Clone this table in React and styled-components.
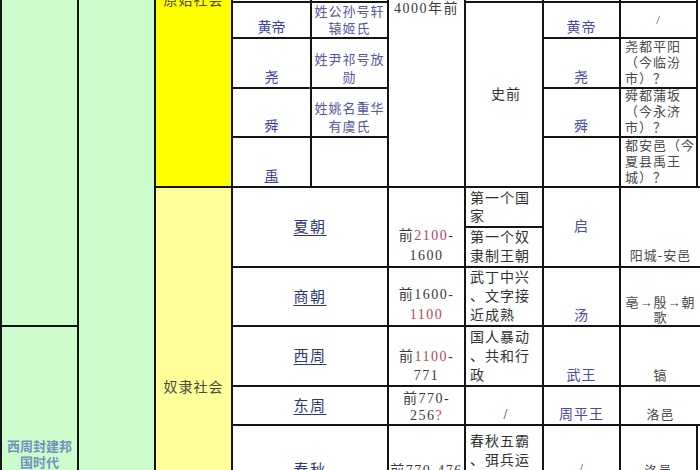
import React from "react";
import styled, { createGlobalStyle, css } from "styled-components";

const Global = createGlobalStyle`
  html, body { margin: 0; padding: 0; background: #fff; }
  body { font-family: "Liberation Serif", "Noto Sans CJK SC", serif; }
`;

const Viewport = styled.div`
  width: 700px;
  height: 470px;
  overflow: hidden;
  background: #fff;
`;

const Sheet = styled.div`
  box-sizing: border-box;
  width: 700px;
  margin-top: -30px;
  padding-left: 2px;
  display: grid;
  grid-template-columns: 75px 75px 75px 77px 75px 75px 76px 75px 75px 1fr;
  grid-template-rows: 31px 34px 48px 47px 48px 38px 38px 57px 58px 37px 88px;
  gap: 2px;
  background: #141414;
`;

const vMap = { top: "flex-start", center: "center", bottom: "flex-end" };

const Cell = styled.div`
  grid-area: ${(p) => p.$area};
  background: #fff;
  min-width: 0;
  overflow: hidden;
  display: flex;
  flex-direction: column;
  justify-content: ${(p) => vMap[p.$v || "bottom"]};
  align-items: ${(p) => (p.$h === "left" ? "flex-start" : "center")};
  text-align: ${(p) => (p.$h === "left" ? "left" : "center")};
  font-family: "Liberation Serif", "Noto Sans CJK SC", serif;
  font-size: 14px;
  line-height: 18px;
  color: #3a3a3a;
`;

const Line = styled.span`
  display: block;
  white-space: nowrap;
`;

const Red = styled.span`
  color: #b2475a;
`;

const GreenCell = styled(Cell)`
  background: #ccfccc;
  justify-content: flex-start;
  padding-top: ${(p) => p.$pt || 0}px;
  font-size: 13px;
  line-height: 16px;
  font-weight: 700;
  color: #7393bd;
`;

const EraCell = styled(Cell)`
  background: ${(p) => (p.$bright ? "#ffff00" : "#ffff99")};
  justify-content: flex-start;
  padding-top: ${(p) => p.$pt}px;
  line-height: 20px;
  letter-spacing: 1px;
  color: #4a4a3a;
`;

const BlankCell = styled(Cell)``;

const NameCell = styled(Cell)`
  color: #3d3d9c;
  ${(p) =>
    p.$underline &&
    css`
      text-decoration: underline;
    `}
`;

const DescCell = styled(Cell)`
  font-size: 13px;
  letter-spacing: 1px;
  line-height: ${(p) => p.$lh || 18}px;
  color: #55559c;
`;

const DateCell = styled(Cell)`
  letter-spacing: 1.5px;
  line-height: ${(p) => p.$lh || 19}px;
  padding-top: ${(p) => p.$pt || 0}px;
  color: #3a3a3a;
`;

const EventCell = styled(Cell)`
  padding-left: 4px;
  padding-top: ${(p) => p.$pt || 0}px;
  letter-spacing: 1px;
  line-height: ${(p) => p.$lh || 19}px;
  color: #333;
`;

const RulerCell = styled(Cell)`
  color: #4a4aa0;
  letter-spacing: 1px;
`;

const CapitalCell = styled(Cell)`
  font-size: 13px;
  letter-spacing: 1px;
  line-height: ${(p) => p.$lh || 16}px;
  padding-left: ${(p) => (p.$h === "left" ? 4 : 0)}px;
  color: #4a4a4a;
`;

const DynastyCell = styled(Cell)`
  font-size: 15px;
  letter-spacing: 1.5px;
  color: #2d3872;
  text-decoration: underline;
  text-underline-offset: 3px;
`;

const Lines = ({ items }) =>
  items.map((t, i) => <Line key={i}>{t}</Line>);

export default function App() {
  return (
    <>
      <Global />
      <Viewport>
        <Sheet>
          {/* left green columns */}
          <GreenCell $area="1 / 1 / 9 / 2" />
          <GreenCell $area="9 / 1 / 12 / 2" $pt={112}>
            <Lines items={["西周封建邦", "国时代"]} />
          </GreenCell>
          <GreenCell $area="1 / 2 / 12 / 3" />

          {/* era column */}
          <EraCell $area="1 / 3 / 6 / 4" $bright $pt={21}>
            原始社会
          </EraCell>
          <EraCell $area="6 / 3 / 12 / 4" $pt={190}>
            奴隶社会
          </EraCell>

          {/* hidden top row */}
          <BlankCell $area="1 / 4 / 2 / 5" />
          <BlankCell $area="1 / 5 / 2 / 6" />
          <DateCell $area="1 / 6 / 6 / 7" $v="top" $pt={29} $lh={20}>
            4000年前
          </DateCell>
          <BlankCell $area="1 / 7 / 2 / 8" />
          <BlankCell $area="1 / 8 / 2 / 9" />
          <BlankCell $area="1 / 9 / 2 / 10" />
          <BlankCell $area="1 / 10 / 6 / 11" />

          {/* 黄帝 */}
          <NameCell $area="2 / 4 / 3 / 5">黄帝</NameCell>
          <DescCell $area="2 / 5 / 3 / 6" $lh={17}>
            <Lines items={["姓公孙号轩", "辕姬氏"]} />
          </DescCell>
          <EventCell $area="2 / 7 / 6 / 8" $v="center" $h="center">
            史前
          </EventCell>
          <RulerCell $area="2 / 8 / 3 / 9">黄帝</RulerCell>
          <CapitalCell $area="2 / 9 / 3 / 10" $v="center">
            /
          </CapitalCell>

          {/* 尧 */}
          <NameCell $area="3 / 4 / 4 / 5">尧</NameCell>
          <DescCell $area="3 / 5 / 4 / 6">
            <Lines items={["姓尹祁号放", "勋"]} />
          </DescCell>
          <RulerCell $area="3 / 8 / 4 / 9">尧</RulerCell>
          <CapitalCell $area="3 / 9 / 4 / 10" $h="left">
            <Lines items={["尧都平阳", "（今临汾", "市）？"]} />
          </CapitalCell>

          {/* 舜 */}
          <NameCell $area="4 / 4 / 5 / 5">舜</NameCell>
          <DescCell $area="4 / 5 / 5 / 6">
            <Lines items={["姓姚名重华", "有虞氏"]} />
          </DescCell>
          <RulerCell $area="4 / 8 / 5 / 9">舜</RulerCell>
          <CapitalCell $area="4 / 9 / 5 / 10" $h="left">
            <Lines items={["舜都蒲坂", "（今永济", "市）？"]} />
          </CapitalCell>

          {/* 禹 */}
          <NameCell $area="5 / 4 / 6 / 5" $underline>
            禹
          </NameCell>
          <BlankCell $area="5 / 5 / 6 / 6" />
          <BlankCell $area="5 / 8 / 6 / 9" />
          <CapitalCell $area="5 / 9 / 6 / 10" $h="left">
            <Lines items={["都安邑（今", "夏县禹王", "城）？"]} />
          </CapitalCell>

          {/* 夏朝 */}
          <DynastyCell $area="6 / 4 / 8 / 6" $v="center">
            夏朝
          </DynastyCell>
          <DateCell $area="6 / 6 / 8 / 7" $lh={20}>
            <Line>
              前<Red>2100</Red>-
            </Line>
            <Line>1600</Line>
          </DateCell>
          <EventCell $area="6 / 7 / 7 / 8" $h="left" $lh={18}>
            <Lines items={["第一个国", "家"]} />
          </EventCell>
          <EventCell $area="7 / 7 / 8 / 8" $h="left">
            <Lines items={["第一个奴", "隶制王朝"]} />
          </EventCell>
          <RulerCell $area="6 / 8 / 8 / 9" $v="center">
            启
          </RulerCell>
          <CapitalCell $area="6 / 9 / 8 / 11" $lh={20}>
            阳城-安邑
          </CapitalCell>

          {/* 商朝 */}
          <DynastyCell $area="8 / 4 / 9 / 6" $v="center">
            商朝
          </DynastyCell>
          <DateCell $area="8 / 6 / 9 / 7" $lh={20}>
            <Line>前1600-</Line>
            <Line>
              <Red>1100</Red>
            </Line>
          </DateCell>
          <EventCell $area="8 / 7 / 9 / 8" $h="left">
            <Lines items={["武丁中兴", "、文字接", "近成熟"]} />
          </EventCell>
          <RulerCell $area="8 / 8 / 9 / 9">汤</RulerCell>
          <CapitalCell $area="8 / 9 / 9 / 11" $lh={15}>
            <Lines items={["亳→殷→朝", "歌"]} />
          </CapitalCell>

          {/* 西周 */}
          <DynastyCell $area="9 / 4 / 10 / 6" $v="center">
            西周
          </DynastyCell>
          <DateCell $area="9 / 6 / 10 / 7">
            <Line>
              前<Red>1100</Red>-
            </Line>
            <Line>771</Line>
          </DateCell>
          <EventCell $area="9 / 7 / 10 / 8" $h="left">
            <Lines items={["国人暴动", "、共和行", "政"]} />
          </EventCell>
          <RulerCell $area="9 / 8 / 10 / 9">武王</RulerCell>
          <CapitalCell $area="9 / 9 / 10 / 11" $lh={19}>
            镐
          </CapitalCell>

          {/* 东周 */}
          <DynastyCell $area="10 / 4 / 11 / 6" $v="center">
            东周
          </DynastyCell>
          <DateCell $area="10 / 6 / 11 / 7" $lh={17}>
            <Line>前770-</Line>
            <Line>
              256<Red>?</Red>
            </Line>
          </DateCell>
          <EventCell $area="10 / 7 / 11 / 8" $h="center">
            /
          </EventCell>
          <RulerCell $area="10 / 8 / 11 / 9">周平王</RulerCell>
          <CapitalCell $area="10 / 9 / 11 / 11" $lh={19}>
            洛邑
          </CapitalCell>

          {/* 春秋 */}
          <DynastyCell $area="11 / 4 / 12 / 6" $v="center">
            春秋
          </DynastyCell>
          <DateCell $area="11 / 6 / 12 / 7" $v="center">
            前770-476
          </DateCell>
          <EventCell $area="11 / 7 / 12 / 8" $h="left" $v="top" $pt={6}>
            <Lines items={["春秋五霸", "、弭兵运", "动"]} />
          </EventCell>
          <RulerCell $area="11 / 8 / 12 / 9" $v="center">
            /
          </RulerCell>
          <CapitalCell $area="11 / 9 / 12 / 10" $v="center" $lh={19}>
            洛邑
          </CapitalCell>
          <BlankCell $area="11 / 10 / 12 / 11" />
        </Sheet>
      </Viewport>
    </>
  );
}
